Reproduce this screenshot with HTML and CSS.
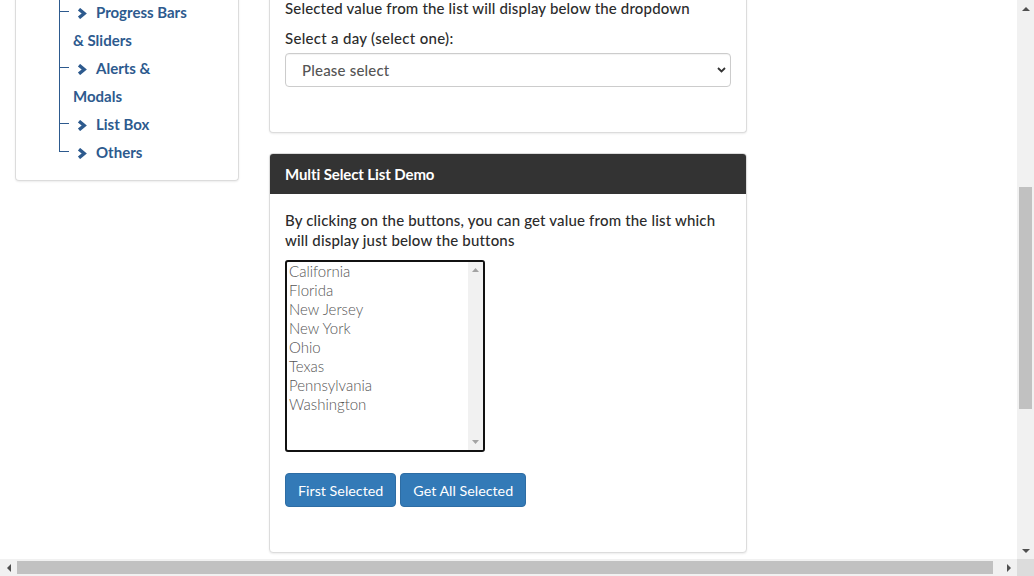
FILE: index.html
```html
<!DOCTYPE html>
<html lang="en">
<head>
<meta charset="utf-8">
<title>Select Dropdown List Demo</title>
<link rel="stylesheet" href="styles.css">
</head>
<body>
<div class="screen">
  <div class="viewport">
    <div class="page">
      <aside class="sidebar">
        <ul class="tree">
          <li><svg class="chev" viewBox="0 0 10 11"><polyline points="2,1.2 7.2,5.5 2,9.8"/></svg>Progress Bars<br>&amp; Sliders</li>
          <li><svg class="chev" viewBox="0 0 10 11"><polyline points="2,1.2 7.2,5.5 2,9.8"/></svg>Alerts &amp;<br>Modals</li>
          <li><svg class="chev" viewBox="0 0 10 11"><polyline points="2,1.2 7.2,5.5 2,9.8"/></svg>List Box</li>
          <li class="last"><svg class="chev" viewBox="0 0 10 11"><polyline points="2,1.2 7.2,5.5 2,9.8"/></svg>Others</li>
        </ul>
      </aside>
      <main class="content">
        <section class="card card-top">
          <p class="para">Selected value from the list will display below the dropdown</p>
          <label class="label" for="day">Select a day (select one):</label>
          <div class="select-wrap">
            <select id="day" class="select">
              <option>Please select</option>
              <option>Sunday</option>
              <option>Monday</option>
            </select>
            <svg class="select-arrow" viewBox="0 0 9 6"><polyline points="1,1 4.5,4.5 8,1"/></svg>
          </div>
        </section>
        <section class="card card-multi">
          <header class="card-head">Multi Select List Demo</header>
          <div class="card-body">
            <p class="para">By clicking on the buttons, you can get value from the list which will display just below the buttons</p>
            <div class="listbox">
              <ul class="options">
                <li>California</li>
                <li>Florida</li>
                <li>New Jersey</li>
                <li>New York</li>
                <li>Ohio</li>
                <li>Texas</li>
                <li>Pennsylvania</li>
                <li>Washington</li>
              </ul>
              <div class="lb-scroll">
                <svg class="lb-arrow" viewBox="0 0 7 4"><polygon points="0,4 3.5,0 7,4"/></svg>
                <svg class="lb-arrow" viewBox="0 0 7 4"><polygon points="0,0 7,0 3.5,4"/></svg>
              </div>
            </div>
            <div class="buttons">
              <button class="btn">First Selected</button>
              <button class="btn">Get All Selected</button>
            </div>
          </div>
        </section>
      </main>
    </div>
  </div>
  <div class="vscroll">
    <div class="sb-btn"><svg class="tri-v" viewBox="0 0 8 4"><polygon points="0,4 4,0 8,4"/></svg></div>
    <div class="vthumb"></div>
    <div class="sb-fill"></div>
    <div class="sb-btn"><svg class="tri-v" viewBox="0 0 8 4"><polygon points="0,0 8,0 4,4"/></svg></div>
  </div>
  <div class="hscroll">
    <div class="sb-btn"><svg class="tri-h" viewBox="0 0 4 8"><polygon points="4,0 4,8 0,4"/></svg></div>
    <div class="hthumb"></div>
    <div class="sb-fill"></div>
    <div class="sb-btn"><svg class="tri-h" viewBox="0 0 4 8"><polygon points="0,0 4,4 0,8"/></svg></div>
  </div>
  <div class="corner"></div>
</div>
</body>
</html>
```

FILE: styles.css
```css
* { box-sizing: border-box; }
html, body { margin: 0; padding: 0; }
body {
  width: 1034px;
  height: 576px;
  overflow: hidden;
  background: #fff;
  font-family: Lato, "Noto Sans", sans-serif;
  font-size: 15px;
  color: #2b2b2b;
}
.screen {
  display: grid;
  grid-template-columns: 1017px 17px;
  grid-template-rows: 559px 17px;
  width: 1034px;
  height: 576px;
}
.viewport { overflow: hidden; background: #fff; }
.page {
  display: flex;
  align-items: flex-start;
  gap: 30px;
  margin-top: -2px;
  padding-left: 15px;
}

/* sidebar */
.sidebar {
  width: 224px;
  border: 1px solid #dcdcdc;
  border-top: none;
  border-radius: 0 0 4px 4px;
  box-shadow: 0 1px 2px rgba(0,0,0,0.08);
  padding: 0 0 14px 0;
}
.tree {
  list-style: none;
  margin: 0;
  padding: 0 0 0 44px;
}
.tree li {
  position: relative;
  padding-left: 13px;
  line-height: 28px;
  font-weight: 700;
  color: #2d5a8e;
}
.tree li::before {
  content: "";
  position: absolute;
  left: -1px;
  top: 0;
  bottom: 0;
  width: 1px;
  background: #2d5a8e;
}
.tree li.last::before { bottom: auto; height: 14px; }
.tree li::after {
  content: "";
  position: absolute;
  left: -1px;
  top: 13px;
  width: 10px;
  height: 1px;
  background: #2d5a8e;
}
.chev {
  width: 10px;
  height: 11px;
  margin: 0 9px 0 4px;
  vertical-align: -1px;
  fill: none;
  stroke: #2d5a8e;
  stroke-width: 3.4;
  stroke-linecap: butt;
  stroke-linejoin: miter;
}

/* content cards */
.content {
  width: 478px;
  display: flex;
  flex-direction: column;
  gap: 20px;
}
.card {
  border: 1px solid #dcdcdc;
  border-radius: 4px;
  box-shadow: 0 1px 2px rgba(0,0,0,0.08);
  background: #fff;
}
.card-top {
  border-top: none;
  border-radius: 0 0 4px 4px;
  padding: 0 15px 45px;
  display: flex;
  flex-direction: column;
}
.para {
  margin: 0;
  line-height: 20px;
  font-weight: 500;
  letter-spacing: 0.17px;
}
.label {
  margin-top: 10px;
  line-height: 20px;
  font-weight: 500;
  letter-spacing: 0.3px;
}
.select-wrap {
  position: relative;
  margin-top: 5px;
}
.select {
  display: block;
  width: 446px;
  height: 34px;
  border: 1px solid #cccccc;
  border-radius: 4px;
  background: #fff;
  padding: 0 16px;
  font-family: inherit;
  font-size: 15px;
  font-weight: 500;
  letter-spacing: 0.2px;
  color: #555;
  -webkit-appearance: none;
  appearance: none;
  box-shadow: inset 0 1px 1px rgba(0,0,0,0.05);
}
.select-arrow {
  position: absolute;
  right: 5px;
  top: 14px;
  width: 9px;
  height: 6px;
  fill: none;
  stroke: #333;
  stroke-width: 1.8;
  pointer-events: none;
}
.card-multi { overflow: hidden; }
.card-head {
  background: #333333;
  color: #fff;
  font-weight: 700;
  height: 40px;
  line-height: 40px;
  padding: 0 15px;
  letter-spacing: -0.1px;
}
.card-body {
  padding: 16px 15px 45px;
}

/* listbox */
.listbox {
  display: flex;
  width: 200px;
  height: 192px;
  margin-top: 10px;
  border: 2px solid #111;
  border-radius: 3px;
  overflow: hidden;
}
.options {
  list-style: none;
  margin: 0;
  padding: 0 2px;
  flex: 1;
}
.options li {
  line-height: 19px;
  font-weight: 300;
  color: #555;
}
.lb-scroll {
  width: 15px;
  background: #f1f1f1;
  display: flex;
  flex-direction: column;
  justify-content: space-between;
  align-items: center;
  padding: 6px 0 6px;
}
.lb-arrow { width: 7px; height: 4px; fill: #a3a3a3; }

/* buttons */
.buttons {
  display: flex;
  gap: 4px;
  margin-top: 21px;
}
.btn {
  height: 34px;
  padding: 0 12px;
  background: #337ab7;
  border: 1px solid #2e6da4;
  border-radius: 4px;
  color: #fff;
  font-family: inherit;
  font-size: 14.3px;
  font-weight: 400;
}

/* browser scrollbars */
.vscroll {
  background: #f1f1f1;
  display: flex;
  flex-direction: column;
  align-items: center;
}
.hscroll {
  background: #f1f1f1;
  display: flex;
  align-items: center;
}
.sb-btn {
  width: 17px;
  height: 17px;
  flex: none;
  display: flex;
  align-items: center;
  justify-content: center;
}
.tri-v { width: 8px; height: 4px; fill: #505050; }
.tri-h { width: 4px; height: 8px; fill: #505050; }
.vthumb {
  width: 13px;
  height: 222px;
  margin-top: 170px;
  background: #c1c1c1;
  flex: none;
}
.hthumb {
  width: 976px;
  height: 13px;
  background: #c1c1c1;
  flex: none;
}
.sb-fill { flex: 1; }
.corner { background: #dcdcdc; }
```
